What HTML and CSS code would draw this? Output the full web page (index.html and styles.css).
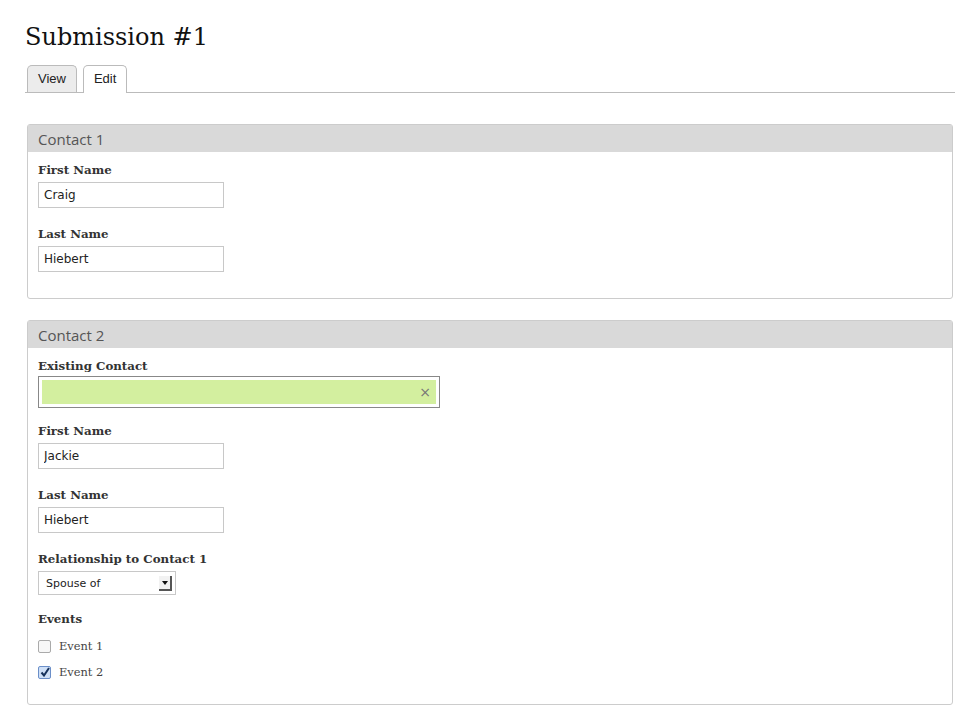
FILE: index.html
```html
<!DOCTYPE html>
<html lang="en">
<head>
    <meta charset="UTF-8">
    <title>Submission #1</title>
    <link rel="stylesheet" href="styles.css">
</head>
<body>

<h1 class="page-title">Submission #1</h1>

<!-- Tabs -->
<ul class="tabs">
    <li class="tab">View</li>
    <li class="tab active">Edit</li>
</ul>

<!-- Contact 1 -->
<div class="panel">
    <div class="panel-head">Contact 1</div>
    <div class="panel-body">
        <div class="field">
            <label>First Name</label>
            <input type="text" class="text-input" value="Craig">
        </div>
        <div class="field">
            <label>Last Name</label>
            <input type="text" class="text-input" value="Hiebert">
        </div>
    </div>
</div>

<!-- Contact 2 -->
<div class="panel">
    <div class="panel-head">Contact 2</div>
    <div class="panel-body">
        <div class="field field-tight">
            <label>Existing Contact</label>
            <div class="token-box">
                <div class="token"><span class="token-x">&times;</span></div>
            </div>
        </div>
        <div class="field">
            <label>First Name</label>
            <input type="text" class="text-input" value="Jackie">
        </div>
        <div class="field">
            <label>Last Name</label>
            <input type="text" class="text-input" value="Hiebert">
        </div>
        <div class="field field-select">
            <label>Relationship to Contact 1</label>
            <div class="select-box">
                <span>Spouse of</span>
                <span class="select-arrow"></span>
            </div>
        </div>
        <div class="field field-last">
            <label>Events</label>
            <div class="check-row"><span class="check"></span>Event 1</div>
            <div class="check-row"><span class="check checked">
                <svg width="10" height="10" viewBox="0 0 10 10"><path d="M1.5 5.5 L4 8.5 L9 1" fill="none" stroke="#16325c" stroke-width="2"/></svg>
            </span>Event 2</div>
        </div>
    </div>
</div>

</body>
</html>
```

FILE: styles.css
```css
body {
    margin: 0;
    padding: 0 18px 0 25px;
    font-family: "DejaVu Serif", serif;
    color: #333;
    background: #fff;
}
.page-title {
    font-family: "DejaVu Serif", serif;
    font-weight: normal;
    font-size: 24px;
    color: #111;
    margin: 0;
    padding-top: 21px;
    line-height: 32px;
}
.tabs {
    list-style: none;
    margin: 12px 0 0 0;
    padding: 0 0 0 2px;
    display: flex;
    gap: 6px;
    border-bottom: 1px solid #bbb;
    height: 27px;
}
.tab {
    font-family: "Liberation Sans", Arial, sans-serif;
    font-size: 13px;
    color: #222;
    background: #ececec;
    border: 1px solid #bbb;
    border-bottom: none;
    border-radius: 5px 5px 0 0;
    padding: 0 10px;
    line-height: 26px;
    height: 27px;
    box-sizing: border-box;
}
.tab.active {
    background: #fff;
    height: 28px;
}
.panel {
    margin: 31px 2px 0 2px;
    border: 1px solid #ccc;
    border-radius: 3px;
}
.panel + .panel {
    margin-top: 21px;
}
.panel-head {
    background: #d9d9d9;
    height: 27px;
    line-height: 28px;
    padding-left: 10px;
    font-family: "Open Sans", sans-serif;
    font-size: 15px;
    color: #555;
}
.panel-body {
    padding: 10px 10px 8px 10px;
}
.field {
    margin-bottom: 18px;
}
.field-tight {
    margin-bottom: 15px;
}
.field-select {
    margin-bottom: 16px;
}
.field-last {
    margin-bottom: 16px;
}
.field label {
    display: block;
    font-weight: bold;
    font-size: 11.8px;
    color: #333;
    line-height: 16px;
    margin-bottom: 4px;
}
.field-tight label {
    margin-bottom: 2px;
}
.text-input {
    display: block;
    width: 186px;
    height: 26px;
    box-sizing: border-box;
    border: 1px solid #c8c8c8;
    padding: 0 5px;
    font-family: "DejaVu Sans", sans-serif;
    font-size: 12px;
    color: #222;
    margin: 0;
}
.token-box {
    width: 402px;
    height: 32px;
    box-sizing: border-box;
    border: 1px solid #888;
    padding: 3px;
}
.token {
    background: #d3ef9f;
    height: 24px;
    display: flex;
    justify-content: flex-end;
    align-items: center;
    padding-right: 5px;
}
.token-x {
    font-family: "DejaVu Sans", sans-serif;
    font-size: 14px;
    color: #777;
}
.select-box {
    width: 138px;
    height: 24px;
    box-sizing: border-box;
    border: 1px solid #c8c8c8;
    display: flex;
    align-items: center;
    justify-content: space-between;
    padding: 0 3px 0 7px;
    font-family: "DejaVu Sans", sans-serif;
    font-size: 11px;
    color: #222;
}
.select-arrow {
    width: 13px;
    height: 15px;
    box-sizing: border-box;
    border-right: 2px solid #555;
    border-bottom: 2px solid #555;
    background: #f2f2f2;
    position: relative;
}
.select-arrow::after {
    content: "";
    position: absolute;
    left: 3px;
    top: 5px;
    border-left: 3px solid transparent;
    border-right: 3px solid transparent;
    border-top: 4px solid #111;
}
.check-row {
    display: flex;
    align-items: center;
    font-size: 11.4px;
    color: #444;
    margin-top: 10px;
    line-height: 16px;
}
.field label + .check-row {
    margin-top: 11px;
}
.check {
    width: 11px;
    height: 11px;
    border: 1px solid #aaa;
    border-radius: 2px;
    background: #f7f7f7;
    margin-right: 8px;
    display: flex;
    align-items: center;
    justify-content: center;
}
.check.checked {
    background: #cfe0f7;
    border-color: #6b8fc9;
}
```
